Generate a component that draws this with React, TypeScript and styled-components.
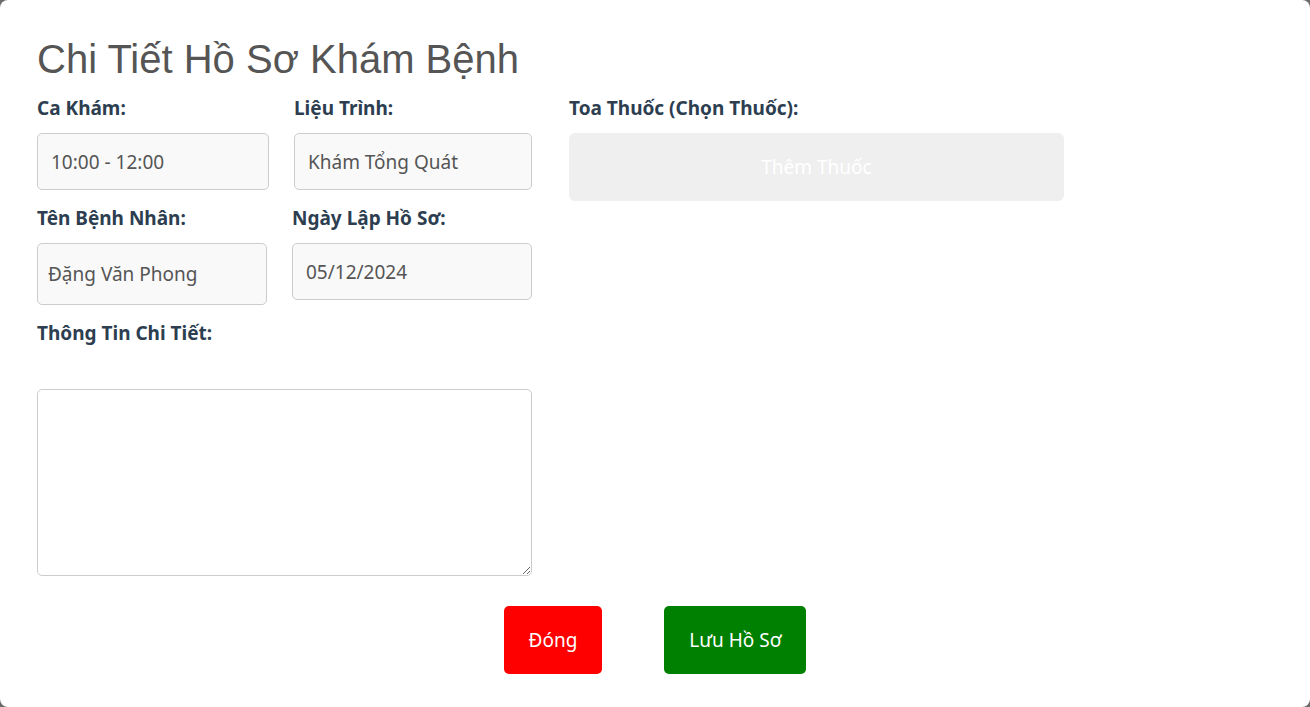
import React from 'react';
import styled, { createGlobalStyle } from 'styled-components';

const GlobalStyle = createGlobalStyle`
  html, body {
    margin: 0;
    padding: 0;
    background: #6b6b6b;
  }
  * {
    box-sizing: border-box;
  }
`;

const Modal = styled.div`
  width: 1310px;
  height: 707px;
  background: #fff;
  border-radius: 8px;
  padding: 34px 37px 0;
  font-family: 'Noto Sans', 'Open Sans', sans-serif;
`;

const Title = styled.h2`
  margin: 0 0 12px;
  font-family: 'Liberation Sans', Arial, sans-serif;
  font-weight: 400;
  font-size: 40px;
  line-height: 50px;
  color: #555;
`;

const Body = styled.div`
  display: flex;
  gap: 37px;
`;

const Column = styled.div`
  width: 495px;
  display: flex;
  flex-direction: column;
`;

const Row = styled.div`
  display: flex;
  align-items: flex-start;
  gap: 25px;
  margin-bottom: 16px;
`;

const Field = styled.div<{ width?: number }>`
  width: ${({ width }) => (width ? `${width}px` : '100%')};
  display: flex;
  flex-direction: column;
`;

const Label = styled.label<{ gap?: number }>`
  font-size: 19px;
  font-weight: 700;
  line-height: 24px;
  color: #2c3e50;
  margin-bottom: ${({ gap }) => gap ?? 13}px;
`;

const Input = styled.input<{ h?: number; pad?: number }>`
  height: ${({ h }) => h ?? 57}px;
  width: 100%;
  padding: 0 ${({ pad }) => pad ?? 13}px;
  border: 1px solid #ccc;
  border-radius: 5px;
  background: #f9f9f9;
  color: #555;
  font-family: 'Noto Sans', 'Open Sans', sans-serif;
  font-size: 19px;
  outline: none;
`;

const TextArea = styled.textarea`
  width: 100%;
  height: 187px;
  border: 1px solid #ccc;
  border-radius: 5px;
  background: #fff;
  padding: 10px;
  font-family: 'Noto Sans', 'Open Sans', sans-serif;
  font-size: 16px;
  outline: none;
`;

const AddButton = styled.button`
  height: 68px;
  width: 100%;
  border: none;
  border-radius: 6px;
  background: #efefef;
  color: #fff;
  font-family: 'Noto Sans', 'Open Sans', sans-serif;
  font-size: 19px;
`;

const Footer = styled.div`
  display: flex;
  justify-content: center;
  gap: 62px;
  margin-top: 30px;
`;

const ActionButton = styled.button<{ color: string }>`
  height: 68px;
  padding: 0 25px;
  border: none;
  border-radius: 5px;
  background: ${({ color }) => color};
  color: #fff;
  font-family: 'Noto Sans', 'Open Sans', sans-serif;
  font-size: 19px;
  cursor: pointer;
`;

export default function App() {
  return (
    <>
      <GlobalStyle />
      <Modal>
        <Title>Chi Tiết Hồ Sơ Khám Bệnh</Title>
        <Body>
          <Column>
            <Row>
              <Field width={232}>
                <Label>Ca Khám:</Label>
                <Input readOnly value="10:00 - 12:00" />
              </Field>
              <Field width={238}>
                <Label>Liệu Trình:</Label>
                <Input readOnly value="Khám Tổng Quát" />
              </Field>
            </Row>
            <Row>
              <Field width={230}>
                <Label>Tên Bệnh Nhân:</Label>
                <Input readOnly h={62} pad={10} value="Đặng Văn Phong" />
              </Field>
              <Field width={240}>
                <Label>Ngày Lập Hồ Sơ:</Label>
                <Input readOnly value="05/12/2024" />
              </Field>
            </Row>
            <Field>
              <Label gap={44}>Thông Tin Chi Tiết:</Label>
              <TextArea />
            </Field>
          </Column>
          <Column>
            <Field>
              <Label>Toa Thuốc (Chọn Thuốc):</Label>
              <AddButton>Thêm Thuốc</AddButton>
            </Field>
          </Column>
        </Body>
        <Footer>
          <ActionButton color="#ff0000">Đóng</ActionButton>
          <ActionButton color="#008000">Lưu Hồ Sơ</ActionButton>
        </Footer>
      </Modal>
    </>
  );
}
